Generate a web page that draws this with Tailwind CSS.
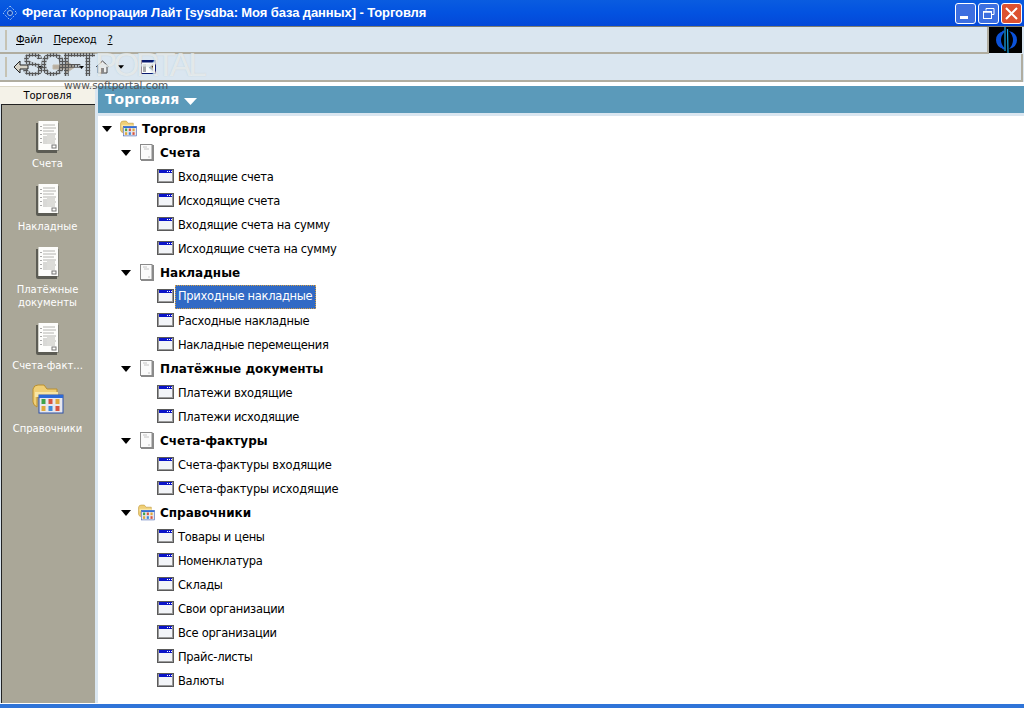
<!DOCTYPE html>
<html><head><meta charset="utf-8"><script src="https://cdn.jsdelivr.net/npm/@tailwindcss/browser@4"></script></head>
<body class="m-0 overflow-hidden">
<svg width="0" height="0" class="absolute">
<defs>
<symbol id="win" viewBox="0 0 17 14"><rect x="0.500" y="0.500" width="16" height="13" fill="#f2f4f8" stroke="#5a5a5a"/><rect x="2" y="1" width="13.500" height="3" fill="#0a14c8"/><rect x="10" y="2" width="1" height="1" fill="#fff"/><rect x="12" y="2" width="1" height="1" fill="#fff"/><rect x="14" y="2" width="1" height="1" fill="#fff"/><path d="M15.500 1v12M1 12.500h15M1.500 1v11" stroke="#9a9a9a"/></symbol>
<symbol id="doc" viewBox="0 0 14 17"><rect x="1" y="1" width="13" height="16" fill="#8a8a8a"/><rect x="0.500" y="0.500" width="11.500" height="15" fill="#fbfbfb" stroke="#8a8a8a"/><path d="M3 3h4M4 5h5M8 13h2" stroke="#c4c4c4"/></symbol>
<symbol id="folder" viewBox="0 0 32 32"><path d="M1 6q1-4 5-4h6l3 4h10v8H5v10q-4-2-4-5z" fill="#f0cf76" stroke="#b98f30"/><path d="M3 9h23v5H3z" fill="#f8e6a6"/><rect x="7" y="12" width="24" height="18" fill="#e8e8ee" stroke="#2c50a8"/><rect x="7" y="12" width="24" height="3" fill="#2c6ad8"/><rect x="9.500" y="16" width="4" height="5" fill="#3fa34a"/><rect x="16.500" y="16" width="4" height="5" fill="#d9553f"/><rect x="23.500" y="16" width="4" height="5" fill="#e0a93b"/><rect x="9.500" y="23" width="4" height="5" fill="#e0a93b"/><rect x="16.500" y="23" width="4" height="5" fill="#3f8ad9"/><rect x="23.500" y="23" width="4" height="5" fill="#d9553f"/></symbol>
<symbol id="book" viewBox="0 0 24 32"><path d="M0 2h3v27h18v3H2q-2 0-2-2z" fill="#5c5c54"/><path d="M21 2h2v28h-2z" fill="#8a8a80"/><path d="M2 0h20v29H2z" fill="#fdfdfb"/><path d="M2 0h1v29H2z" fill="#d0d0c8"/><path d="M7 4h12M7 7h13M7 10h11M7 13h13M7 16h12M7 18h13M7 20h10M7 22h12" stroke="#b4b4b0"/><path d="M11 14h8v9h-8z" fill="#dcdcd8"/><path d="M5 5v18" stroke="#555" stroke-dasharray="1 3"/><rect x="16" y="24" width="4" height="3" fill="none" stroke="#777"/></symbol>
<symbol id="arr" viewBox="0 0 10 6"><path d="M0 0h10L5 6z" fill="#000"/></symbol>
</defs>
</svg>
<div class="relative w-[1024px] h-[708px] overflow-hidden flex flex-col bg-[#dae6f0] font-['DejaVu_Sans',sans-serif] text-black">

<div class="h-[26px] shrink-0 flex items-center bg-gradient-to-b from-[#0a5ce0] via-[#0352e0] to-[#0448d8]">
  <svg class="ml-[2px] w-[16px] h-[16px]" viewBox="0 0 16 16"><path d="M8 1l7 7-7 7-7-7z" fill="none" stroke="#9cc0f0" stroke-dasharray="2 1.500"/><circle cx="8" cy="8" r="2.500" fill="#0a3fb0" stroke="#9cc0f0"/></svg>
  <span class="ml-[4px] font-['Liberation_Sans',sans-serif] font-bold text-[13px] tracking-[-0.1px] text-white">Фрегат Корпорация Лайт [sysdba: Моя база данных] - Торговля</span>
  <div class="ml-auto mr-[2px] flex gap-[2px]">
    <div class="w-[21px] h-[21px] rounded-[3px] border border-white bg-[#3d6fe0] flex items-end justify-center pb-[4px]"><div class="w-[8px] h-[3px] bg-white -translate-x-[2px]"></div></div>
    <div class="w-[21px] h-[21px] rounded-[3px] border border-white bg-[#3d6fe0] flex items-center justify-center"><svg width="13" height="13" viewBox="0 0 13 13" fill="none" stroke="#fff"><path d="M4 1.500h8v6H9.500M4 1.500v2"/><rect x="1.500" y="4.500" width="8" height="7"/><path d="M1 5h8" stroke-width="1.500"/></svg></div>
    <div class="w-[21px] h-[21px] rounded-[3px] border border-white bg-[#dc5130] flex items-center justify-center"><svg width="13" height="13" viewBox="0 0 13 13" stroke="#fff" stroke-width="2"><path d="M1 1l11 11M12 1L1 12"/></svg></div>
  </div>
</div>

<div class="h-[1px] bg-[#7d7d72] shrink-0"></div>
<div class="h-[27px] shrink-0 flex bg-[#dae6f0]">
  <div class="flex-1 flex items-center border-b-2 border-r-2 border-[#b0ada0] pl-[5px]">
    <div class="w-[2px] h-[20px] bg-[#c6c3b4] mr-[9px]"></div>
    <div class="flex gap-[11px] text-[10px] tracking-[-0.3px] leading-none">
      <span><span class="underline">Ф</span>айл</span><span><span class="underline">П</span>ереход</span><span class="underline">?</span>
    </div>
  </div>
  <div class="w-[33px] h-[26px] mr-[2px] bg-black flex items-center justify-center">
    <svg width="26" height="26" viewBox="0 0 26 26"><path d="M11 4Q3 6 3 13t8 9Q7 18 7 13t4-9zM16 4q8 2 8 9t-8 9q4-4 4-9t-4-9z" fill="#0b52d8"/><path d="M11 4q-4 4-4 9t4 9" fill="none" stroke="#0b52d8" stroke-width="2"/><path d="M12 0v24M14.500 2l.5 24" stroke="#19a8e8" stroke-width="1.200"/></svg>
  </div>
</div>
<div class="h-[28px] shrink-0 flex items-center mr-[1px] border-b-2 border-r-2 border-[#b0ada0] pl-[5px] gap-0">
  <div class="w-[2px] h-[20px] bg-[#c6c3b4] mr-[6px]"></div>
  <svg width="16" height="14" viewBox="0 0 16 14"><path d="M7 1L1 7l6 6V9h8V5H7z" fill="#d8d4c8" stroke="#222"/></svg>
  <svg class="ml-[9px]" width="5" height="3"><use href="#arr"/></svg>
  <svg class="ml-[9px]" width="24" height="14" viewBox="0 0 24 14"><path d="M14 1l9 6-9 6V9H1V5h13z" fill="#b8aea0" stroke="#c0b8a8"/></svg>
  <svg class="ml-[3px]" width="5" height="3"><use href="#arr"/></svg>
  <svg class="ml-[11px]" width="15" height="14" viewBox="0 0 15 14"><path d="M1 7l6.500-6L14 7M3 6v7h9V6" fill="#eee" stroke="#444"/><rect x="6" y="8" width="3" height="5" fill="#888"/></svg>
  <svg class="ml-[8px]" width="6" height="4"><use href="#arr"/></svg>
  <svg class="ml-[17px]" width="15" height="14" viewBox="0 0 15 14"><rect x="0.500" y="0.500" width="14" height="13" fill="#fff" stroke="#0a1a70"/><rect x="0.500" y="0.500" width="14" height="2" fill="#0a1a70"/><path d="M2 5h3M2 7h3M2 9h3M2 11h3" stroke="#555"/><path d="M12 4v7L8 7.500z" fill="#000"/></svg>
</div>
<div class="h-[4px] shrink-0 bg-white"></div>

<div class="flex-1 flex min-h-0">
  <div class="w-[95px] flex flex-col">
    <div class="h-[18px] shrink-0 bg-[#f4f2e8] flex items-center justify-center text-[10px] border-t border-[#dcd8c8]">Торговля</div>
    <div class="flex-1 ml-[1px] bg-[#aaa798] border-t border-l border-[#222] pt-[16px] flex flex-col items-center text-white text-[10px] leading-[13px] text-center">
      <svg class="w-[24px] h-[32px] mr-[2px]"><use href="#book"/></svg>
      <div class="mt-[4px] h-[27px] mr-[2px]">Счета</div>
      <svg class="w-[24px] h-[32px] mr-[2px]"><use href="#book"/></svg>
      <div class="mt-[4px] h-[27px] mr-[2px]">Накладные</div>
      <svg class="w-[24px] h-[32px] mr-[2px]"><use href="#book"/></svg>
      <div class="mt-[4px] h-[40px] mr-[2px]">Платёжные<br>документы</div>
      <svg class="w-[24px] h-[32px] mr-[2px]"><use href="#book"/></svg>
      <div class="mt-[4px] h-[24px] mr-[2px] whitespace-nowrap">Счета-факт...</div>
      <svg class="w-[32px] h-[32px] mr-[2px]"><use href="#folder"/></svg>
      <div class="mt-[7px] mr-[2px]">Справочники</div>
    </div>
  </div>
  <div class="w-[3px] bg-[#dae6f0]"></div>
  <div class="flex-1 flex flex-col min-w-0">
    <div class="h-[27px] shrink-0 bg-[#5b9aba] flex items-center pl-[7px] text-white font-bold text-[14px]">Торговля<svg class="ml-[5px] mt-[4px]" width="13" height="7" viewBox="0 0 13 7"><path d="M0 0h13L6.500 7z" fill="#fff"/></svg></div>
    <div class="h-[3px] shrink-0 bg-[#dae6f0]"></div>
    <div class="flex-1 bg-white text-[11.500px] tracking-[-0.3px] pt-[1px]">
      <div class="h-[24px] flex items-center pl-[4px] font-bold text-[12px] tracking-[0px]"><svg class="w-[10px] h-[6px]"><use href="#arr"/></svg><svg class="ml-[8px] w-[17px] h-[17px] -translate-y-[1px]"><use href="#folder"/></svg><span class="ml-[5px]">Торговля</span></div>

      <div class="h-[24px] flex items-center pl-[23px] font-bold text-[12px] tracking-[0px]"><svg class="w-[10px] h-[6px]"><use href="#arr"/></svg><svg class="ml-[9px] w-[14px] h-[17px] -translate-y-[1px]"><use href="#doc"/></svg><span class="ml-[6px]">Счета</span></div>
      <div class="h-[24px] flex items-center pl-[59px]"><svg class="w-[17px] h-[14px] -translate-y-[1px]"><use href="#win"/></svg><span class="ml-[4px] translate-y-[1px]">Входящие счета</span></div>
      <div class="h-[24px] flex items-center pl-[59px]"><svg class="w-[17px] h-[14px] -translate-y-[1px]"><use href="#win"/></svg><span class="ml-[4px] translate-y-[1px]">Исходящие счета</span></div>
      <div class="h-[24px] flex items-center pl-[59px]"><svg class="w-[17px] h-[14px] -translate-y-[1px]"><use href="#win"/></svg><span class="ml-[4px] translate-y-[1px]">Входящие счета на сумму</span></div>
      <div class="h-[24px] flex items-center pl-[59px]"><svg class="w-[17px] h-[14px] -translate-y-[1px]"><use href="#win"/></svg><span class="ml-[4px] translate-y-[1px]">Исходящие счета на сумму</span></div>

      <div class="h-[24px] flex items-center pl-[23px] font-bold text-[12px] tracking-[0px]"><svg class="w-[10px] h-[6px]"><use href="#arr"/></svg><svg class="ml-[9px] w-[14px] h-[17px] -translate-y-[1px]"><use href="#doc"/></svg><span class="ml-[6px]">Накладные</span></div>
      <div class="h-[24px] flex items-center pl-[59px]"><svg class="w-[17px] h-[14px] -translate-y-[1px]"><use href="#win"/></svg><span class="ml-[1px] h-[24px] w-[141px] px-[3px] flex items-center bg-[#316ac5] text-white outline-1 outline-dotted outline-offset-[-1px] outline-[#d8a040]">Приходные накладные</span></div>
      <div class="h-[24px] flex items-center pl-[59px]"><svg class="w-[17px] h-[14px] -translate-y-[1px]"><use href="#win"/></svg><span class="ml-[4px] translate-y-[1px]">Расходные накладные</span></div>
      <div class="h-[24px] flex items-center pl-[59px]"><svg class="w-[17px] h-[14px] -translate-y-[1px]"><use href="#win"/></svg><span class="ml-[4px] translate-y-[1px]">Накладные перемещения</span></div>

      <div class="h-[24px] flex items-center pl-[23px] font-bold text-[12px] tracking-[0px]"><svg class="w-[10px] h-[6px]"><use href="#arr"/></svg><svg class="ml-[9px] w-[14px] h-[17px] -translate-y-[1px]"><use href="#doc"/></svg><span class="ml-[6px]">Платёжные документы</span></div>
      <div class="h-[24px] flex items-center pl-[59px]"><svg class="w-[17px] h-[14px] -translate-y-[1px]"><use href="#win"/></svg><span class="ml-[4px] translate-y-[1px]">Платежи входящие</span></div>
      <div class="h-[24px] flex items-center pl-[59px]"><svg class="w-[17px] h-[14px] -translate-y-[1px]"><use href="#win"/></svg><span class="ml-[4px] translate-y-[1px]">Платежи исходящие</span></div>

      <div class="h-[24px] flex items-center pl-[23px] font-bold text-[12px] tracking-[0px]"><svg class="w-[10px] h-[6px]"><use href="#arr"/></svg><svg class="ml-[9px] w-[14px] h-[17px] -translate-y-[1px]"><use href="#doc"/></svg><span class="ml-[6px]">Счета-фактуры</span></div>
      <div class="h-[24px] flex items-center pl-[59px]"><svg class="w-[17px] h-[14px] -translate-y-[1px]"><use href="#win"/></svg><span class="ml-[4px] translate-y-[1px] tracking-[-0.2px]">Счета-фактуры входящие</span></div>
      <div class="h-[24px] flex items-center pl-[59px]"><svg class="w-[17px] h-[14px] -translate-y-[1px]"><use href="#win"/></svg><span class="ml-[4px] translate-y-[1px] tracking-[-0.2px]">Счета-фактуры исходящие</span></div>

      <div class="h-[24px] flex items-center pl-[23px] font-bold text-[12px] tracking-[0px]"><svg class="w-[10px] h-[6px]"><use href="#arr"/></svg><svg class="ml-[7px] w-[17px] h-[17px] -translate-y-[1px]"><use href="#folder"/></svg><span class="ml-[5px]">Справочники</span></div>
      <div class="h-[24px] flex items-center pl-[59px]"><svg class="w-[17px] h-[14px] -translate-y-[1px]"><use href="#win"/></svg><span class="ml-[4px] translate-y-[1px]">Товары и цены</span></div>
      <div class="h-[24px] flex items-center pl-[59px]"><svg class="w-[17px] h-[14px] -translate-y-[1px]"><use href="#win"/></svg><span class="ml-[4px] translate-y-[1px]">Номенклатура</span></div>
      <div class="h-[24px] flex items-center pl-[59px]"><svg class="w-[17px] h-[14px] -translate-y-[1px]"><use href="#win"/></svg><span class="ml-[4px] translate-y-[1px]">Склады</span></div>
      <div class="h-[24px] flex items-center pl-[59px]"><svg class="w-[17px] h-[14px] -translate-y-[1px]"><use href="#win"/></svg><span class="ml-[4px] translate-y-[1px]">Свои организации</span></div>
      <div class="h-[24px] flex items-center pl-[59px]"><svg class="w-[17px] h-[14px] -translate-y-[1px]"><use href="#win"/></svg><span class="ml-[4px] translate-y-[1px]">Все организации</span></div>
      <div class="h-[24px] flex items-center pl-[59px]"><svg class="w-[17px] h-[14px] -translate-y-[1px]"><use href="#win"/></svg><span class="ml-[4px] translate-y-[1px]">Прайс-листы</span></div>
      <div class="h-[24px] flex items-center pl-[59px]"><svg class="w-[17px] h-[14px] -translate-y-[1px]"><use href="#win"/></svg><span class="ml-[4px] translate-y-[1px]">Валюты</span></div>
    </div>
  </div>
</div>
<div class="h-[5px] shrink-0 bg-[#2f74d8] border-t border-white"></div>

<div class="absolute left-[22px] top-[48px] font-['Liberation_Sans',sans-serif] text-[33px] leading-[33px] whitespace-nowrap flex pointer-events-none">
  <span class="w-[73px] tracking-[-4px] font-bold text-transparent bg-clip-text bg-[radial-gradient(circle,#555_1.200px,transparent_1.500px)] bg-[length:3px_3px]">SOFT</span><span class="tracking-[-3.500px] text-white/60 [text-shadow:0_0_1px_#9aa8]">PORTAL</span>
</div>
<div class="absolute left-[64px] top-[79px] text-[10.500px] text-[#555] leading-[12px] pointer-events-none">www.softportal.com</div>
</div>
</body></html>
